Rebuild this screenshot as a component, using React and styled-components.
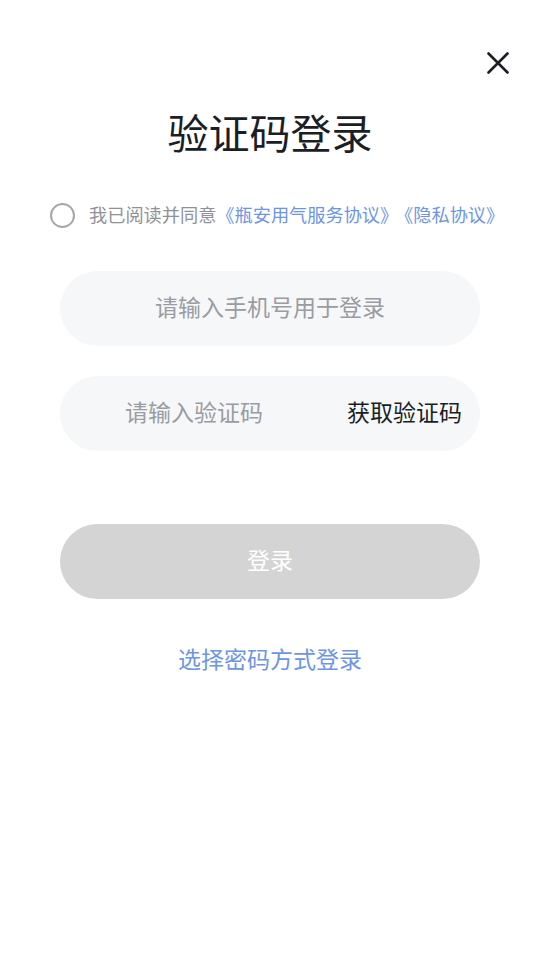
import React from "react";
import styled, { createGlobalStyle } from "styled-components";

const Global = createGlobalStyle`
  html, body { margin: 0; padding: 0; background: #fff; }
  body { font-family: "Noto Sans CJK SC", "Noto Sans", sans-serif; }
  * { box-sizing: border-box; }
`;

const Screen = styled.div`
  width: 540px;
  height: 960px;
  background: #fff;
  display: flex;
  flex-direction: column;
`;

const TopBar = styled.div`
  display: flex;
  justify-content: flex-end;
  padding: 52px 31px 0;
  height: 74px;
`;

const CloseButton = styled.button`
  width: 22px;
  height: 22px;
  padding: 0;
  border: 0;
  background: none;
  display: flex;
  align-items: center;
  justify-content: center;
`;

const Title = styled.h1`
  margin: 33px 0 0;
  font-size: 41px;
  line-height: 48px;
  font-weight: 400;
  color: #1b1e25;
  text-align: center;
`;

const Agreement = styled.div`
  margin: 48px 0 0 50px;
  display: flex;
  align-items: center;
  gap: 14px;
  height: 25px;
`;

const Check = styled.span`
  width: 25px;
  height: 25px;
  border-radius: 50%;
  border: 2px solid #a5a7ad;
  flex: none;
`;

const AgreeText = styled.span`
  font-size: 18.2px;
  line-height: 25px;
  color: #8f9198;
  white-space: nowrap;
  padding-bottom: 2px;
`;

const Link = styled.span`
  color: #6d95e3;
  margin-left: ${(p) => (p.$spaced ? "6px" : "0")};
`;

const Form = styled.div`
  margin: 43px 60px 0;
  display: flex;
  flex-direction: column;
  gap: 30px;
`;

const Field = styled.div`
  height: 75px;
  border-radius: 38px;
  background: #f6f7f9;
  display: flex;
  align-items: center;
  padding: 0 ${(p) => (p.$withAction ? "18px" : "0")} 6px 0;
`;

const Input = styled.input`
  flex: 1;
  min-width: 0;
  border: 0;
  padding: 0;
  background: transparent;
  outline: none;
  text-align: center;
  font-family: inherit;
  font-size: 23px;
  line-height: 32px;
  color: #1b1e25;
  margin-right: ${(p) => (p.$short ? "19px" : "0")};
  &::placeholder { color: #9a9ca3; }
`;

const CodeButton = styled.button`
  border: 0;
  background: none;
  padding: 0;
  font-family: inherit;
  font-size: 23px;
  line-height: 32px;
  color: #1b1e25;
  white-space: nowrap;
`;

const Submit = styled.button`
  margin: 73px 60px 0;
  height: 75px;
  border: 0;
  border-radius: 38px;
  background: #d4d4d4;
  color: #fff;
  font-family: inherit;
  font-size: 23px;
  padding: 0 0 6px;
`;

const Switch = styled.div`
  margin-top: 44px;
  text-align: center;
  font-size: 23px;
  line-height: 30px;
  color: #6d95e3;
`;

export default function App() {
  return (
    <>
      <Global />
      <Screen>
        <TopBar>
          <CloseButton aria-label="关闭">
            <svg width="22" height="22" viewBox="0 0 22 22">
              <path d="M1.5 1.5 L20.5 20.5 M20.5 1.5 L1.5 20.5" stroke="#1b1e25" strokeWidth="2.6" strokeLinecap="round" />
            </svg>
          </CloseButton>
        </TopBar>
        <Title>验证码登录</Title>
        <Agreement>
          <Check />
          <AgreeText>
            我已阅读并同意<Link>《瓶安用气服务协议》</Link><Link $spaced>《隐私协议》</Link>
          </AgreeText>
        </Agreement>
        <Form>
          <Field>
            <Input placeholder="请输入手机号用于登录" />
          </Field>
          <Field $withAction>
            <Input $short placeholder="请输入验证码" />
            <CodeButton>获取验证码</CodeButton>
          </Field>
        </Form>
        <Submit>登录</Submit>
        <Switch>选择密码方式登录</Switch>
      </Screen>
    </>
  );
}
